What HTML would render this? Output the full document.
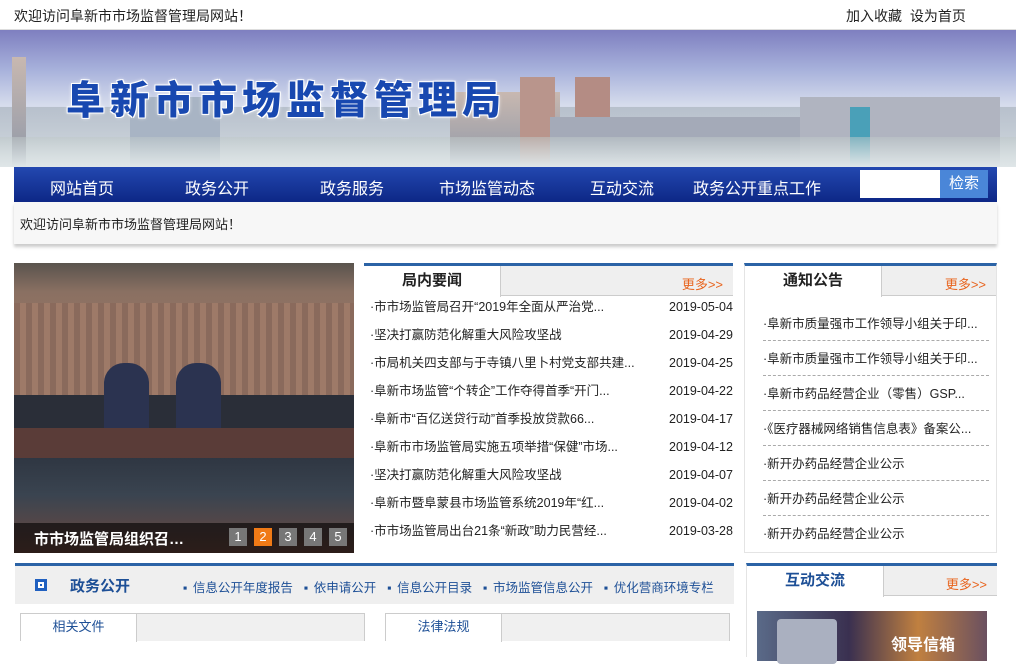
<!DOCTYPE html>
<html><head><meta charset="utf-8"><style>
*{margin:0;padding:0;box-sizing:border-box}
body{width:1016px;height:657px;overflow:hidden;background:#fff;font-family:"Liberation Sans","Noto Sans CJK SC",sans-serif;font-size:13px;color:#222;position:relative}
.abs{position:absolute}
.top{left:0;top:0;width:1016px;height:30px;border-bottom:1px solid #ddd}
.top .l{left:14px;top:6px;font-size:14px}
.top .r{left:846px;top:6px;font-size:14px;word-spacing:4px}
.banner{left:0;top:30px;width:1016px;height:137px;background:linear-gradient(180deg,#7e7fc0 0%,#a9b3dc 30%,#d6dcec 55%,#b9c4d4 75%,#cfd8e0 100%);overflow:hidden}
.city{position:absolute;bottom:0;background:linear-gradient(180deg,#c8b8b0,#8f98a8)}
.title{left:66px;top:78px;font-size:39px;font-weight:900;letter-spacing:5px;color:#1848b0;text-shadow:-1px -1px 0 #fff,1px -1px 0 #fff,-1px 1px 0 #fff,1px 1px 0 #fff,0 0 4px #fff;line-height:48px;white-space:nowrap}
.nav{left:14px;top:167px;width:983px;height:35px;background:linear-gradient(180deg,#2348b0,#0d2786);}
.nav span{position:absolute;top:8px;color:#fff;font-size:16px}
.search{left:860px;top:170px;width:80px;height:28px;background:#fff}
.sbtn{left:940px;top:170px;width:48px;height:28px;background:#4a86d8;color:#fff;font-size:15px;text-align:center;line-height:28px}
.wel{left:14px;top:202px;width:983px;height:42px;background:#f7f7f7;box-shadow:0 3px 3px #ccc;font-size:13px;padding:12px 6px}
.photo{left:14px;top:263px;width:340px;height:290px;background:linear-gradient(180deg,#5a544e 0%,#8a7062 10%,#a47b68 40%,#7a5a4c 60%,#2d3440 65%,#3a4450 80%,#6e4a40 100%);overflow:hidden}
.cap{left:14px;top:523px;width:340px;height:30px;background:rgba(0,0,0,.6)}
.cap .t{left:20px;top:5px;color:#fff;font-size:15px;font-weight:bold}
.num{top:528px;width:18px;height:18px;background:#777;color:#fff;font-size:13px;text-align:center;line-height:18px}
.panel{border-top:3px solid #2b63a6}
.tabbar{background:#efefef;height:30px;border-bottom:1px solid #ccc;position:relative}
.tab{position:absolute;left:0;top:0;height:31px;background:#fff;border-right:1px solid #ccc;text-align:center;font-size:15px;font-weight:bold;line-height:30px}
.more{position:absolute;right:10px;top:8px;color:#e8641e;font-size:13px}
.news div{position:absolute;font-size:12.5px;line-height:14px}
.ntc{position:absolute;left:18px;width:226px;border-bottom:1px dashed #aaa;font-size:12.5px;height:35px;padding-top:10px;line-height:16px}
</style></head><body>
<div class="abs top"><span class="abs l">欢迎访问阜新市市场监督管理局网站！</span><span class="abs r">加入收藏 设为首页</span></div>
<div class="abs banner">
<div class="city" style="left:0;width:1016px;height:60px;background:linear-gradient(180deg,#b7c0cc,#c8d0d8 60%,#d8e0e4)"></div>
<div class="city" style="left:12px;width:14px;height:110px"></div>
<div class="city" style="left:130px;width:90px;height:70px;background:#a8b4c4"></div>
<div class="city" style="left:450px;width:110px;height:75px"></div>
<div class="city" style="left:575px;width:35px;height:90px;background:#b48c84"></div>
<div class="city" style="left:520px;width:35px;height:90px;background:#b9958c"></div>
<div class="city" style="left:550px;width:260px;height:50px;background:#a4aab8"></div>
<div class="city" style="left:800px;width:200px;height:70px;background:#b0b4c0"></div>
<div class="city" style="left:850px;width:20px;height:60px;background:#4aa0b8"></div>
<div class="city" style="left:0;width:1016px;height:30px;background:linear-gradient(180deg,rgba(190,200,200,.5),#dfe6e8)"></div>
</div>
<div class="abs title">阜新市市场监督管理局</div>
<div class="abs nav">
<span style="left:36px">网站首页</span><span style="left:171px">政务公开</span><span style="left:306px">政务服务</span><span style="left:425px">市场监管动态</span><span style="left:576px">互动交流</span><span style="left:679px">政务公开重点工作</span>
</div>
<div class="abs search"></div><div class="abs sbtn">检索</div>
<div class="abs wel">欢迎访问阜新市市场监督管理局网站！</div>
<div class="abs photo">
<div class="abs" style="left:0;top:40px;width:340px;height:100px;background:repeating-linear-gradient(90deg,#8a6a5c 0 6px,#9e7a68 6px 12px)"></div>
<div class="abs" style="left:0;top:132px;width:340px;height:40px;background:#2a2e38"></div>
<div class="abs" style="left:90px;top:100px;width:45px;height:70px;background:#2b3350;border-radius:20px 20px 0 0"></div>
<div class="abs" style="left:162px;top:100px;width:45px;height:70px;background:#2b3350;border-radius:20px 20px 0 0"></div>
<div class="abs" style="left:0;top:165px;width:340px;height:30px;background:#5a3c38"></div>
</div>
<div class="abs cap"><span class="abs t">市市场监管局组织召…</span></div>
<div class="abs num" style="left:229px">1</div><div class="abs num" style="left:254px;background:#f07a16">2</div><div class="abs num" style="left:279px">3</div><div class="abs num" style="left:304px">4</div><div class="abs num" style="left:329px">5</div>

<div class="abs panel" style="left:364px;top:263px;width:369px;height:290px">
<div class="tabbar"><div class="tab" style="width:137px">局内要闻</div><span class="more">更多>></span></div>
<div class="news">
<div style="left:6px;top:34px">·市市场监管局召开“2019年全面从严治党...</div><div style="left:305px;top:34px">2019-05-04</div>
<div style="left:6px;top:62px">·坚决打赢防范化解重大风险攻坚战</div><div style="left:305px;top:62px">2019-04-29</div>
<div style="left:6px;top:90px">·市局机关四支部与于寺镇八里卜村党支部共建...</div><div style="left:305px;top:90px">2019-04-25</div>
<div style="left:6px;top:118px">·阜新市场监管“个转企”工作夺得首季“开门...</div><div style="left:305px;top:118px">2019-04-22</div>
<div style="left:6px;top:146px">·阜新市“百亿送贷行动”首季投放贷款66...</div><div style="left:305px;top:146px">2019-04-17</div>
<div style="left:6px;top:174px">·阜新市市场监管局实施五项举措“保健”市场...</div><div style="left:305px;top:174px">2019-04-12</div>
<div style="left:6px;top:202px">·坚决打赢防范化解重大风险攻坚战</div><div style="left:305px;top:202px">2019-04-07</div>
<div style="left:6px;top:230px">·阜新市暨阜蒙县市场监管系统2019年“红...</div><div style="left:305px;top:230px">2019-04-02</div>
<div style="left:6px;top:258px">·市市场监管局出台21条“新政”助力民营经...</div><div style="left:305px;top:258px">2019-03-28</div>
</div></div>

<div class="abs panel" style="left:744px;top:263px;width:253px;height:290px;border-left:1px solid #e4e4e4;border-right:1px solid #e4e4e4;border-bottom:1px solid #e4e4e4">
<div class="tabbar"><div class="tab" style="width:137px">通知公告</div><span class="more">更多>></span></div>
<div class="ntc" style="top:40px">·阜新市质量强市工作领导小组关于印...</div>
<div class="ntc" style="top:75px">·阜新市质量强市工作领导小组关于印...</div>
<div class="ntc" style="top:110px">·阜新市药品经营企业（零售）GSP...</div>
<div class="ntc" style="top:145px">·《医疗器械网络销售信息表》备案公...</div>
<div class="ntc" style="top:180px">·新开办药品经营企业公示</div>
<div class="ntc" style="top:215px">·新开办药品经营企业公示</div>
<div class="ntc" style="top:250px;border-bottom:none">·新开办药品经营企业公示</div>
</div>

<div class="abs" style="left:15px;top:563px;width:719px;height:94px;border-top:3px solid #2b63a6">
<div style="height:38px;background:#efefef;position:relative">
<div class="abs" style="left:20px;top:13px;width:12px;height:12px;background:#2060c0;border:3px solid #2060c0;box-shadow:inset 0 0 0 2px #fff"></div>
<span class="abs" style="left:55px;top:9px;font-size:15px;font-weight:bold;color:#1d4f96">政务公开</span>
<span class="abs" style="left:168px;top:11px;font-size:12.5px;color:#1d4f96;word-spacing:2px">▪ 信息公开年度报告 &nbsp;▪ 依申请公开 &nbsp;▪ 信息公开目录 &nbsp;▪ 市场监管信息公开 &nbsp;▪ 优化营商环境专栏</span>
</div>
<div class="abs" style="left:5px;top:47px;width:345px;height:28px;background:#f0f0f0;border:1px solid #ccc;border-bottom:none"><div style="width:116px;height:28px;background:#fff;border-right:1px solid #ccc;text-align:center;line-height:26px;color:#1d4f96">相关文件</div></div>
<div class="abs" style="left:370px;top:47px;width:345px;height:28px;background:#f0f0f0;border:1px solid #ccc;border-bottom:none"><div style="width:116px;height:28px;background:#fff;border-right:1px solid #ccc;text-align:center;line-height:26px;color:#1d4f96">法律法规</div></div>
</div>

<div class="abs" style="left:746px;top:563px;width:251px;height:94px;border-top:3px solid #2b63a6;border-left:1px solid #e4e4e4">
<div class="tabbar" style="height:30px"><div class="tab" style="width:137px;color:#1d4f96">互动交流</div><span class="more">更多>></span></div>
<div class="abs" style="left:10px;top:45px;width:230px;height:50px;background:linear-gradient(90deg,#5a6a88,#3a3050 40%,#c08040 70%,#6a5060)">
<div class="abs" style="left:20px;top:8px;width:60px;height:45px;background:#aab0c0;border-radius:4px"></div>
<span class="abs" style="left:134px;top:20px;color:#fff;font-size:16px;font-weight:bold">领导信箱</span></div>
</div>
</body></html>
